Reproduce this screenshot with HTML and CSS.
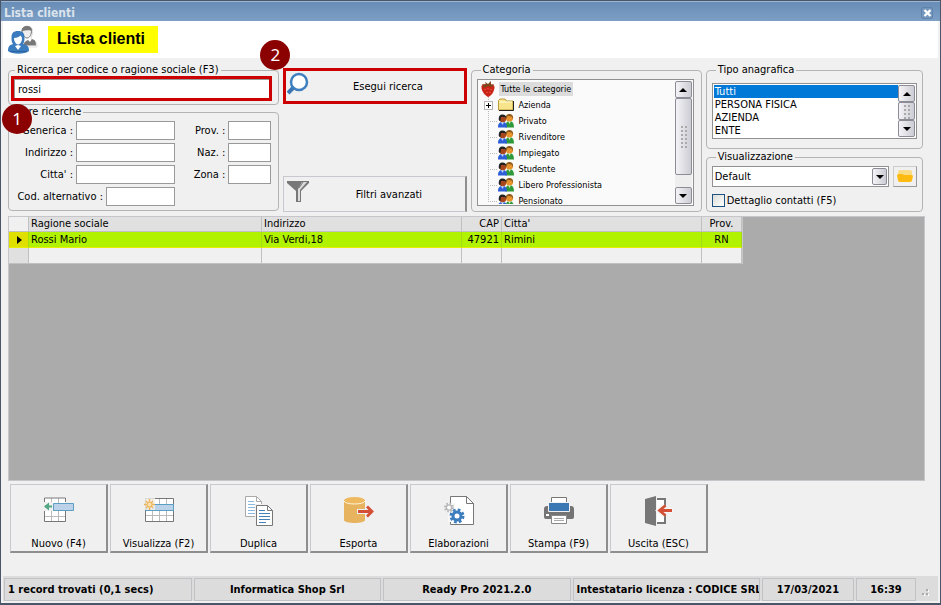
FILE: index.html
```html
<!DOCTYPE html>
<html lang="it">
<head>
<meta charset="utf-8">
<title>Lista clienti</title>
<link rel="stylesheet" href="styles.css">
</head>
<body>
<svg class="defs" aria-hidden="true">
  <defs>
    <symbol id="people" viewBox="0 0 16 16">
      <path d="M7.500 14.500C7.500 10 9 8 11.500 8S16 10 16 14.500z" fill="#2f9a3a"/>
      <path d="M10 8h3l-1.500 3z" fill="#d8f0d0"/>
      <circle cx="11.500" cy="5" r="3.600" fill="#e8932e"/>
      <path d="M8 4.500C8 1.500 10 1 11.500 1S15.500 2 15 6L13.500 3.500 10 3z" fill="#8a5a20"/>
      <path d="M0 14.500C0 10.500 1.500 9 4.500 9S9 10.500 9 14.500z" fill="#2d5fd8"/>
      <path d="M3 9h3l-1.500 3z" fill="#c8dcff"/>
      <circle cx="4.800" cy="6" r="3.300" fill="#a8461c"/>
      <path d="M.8 7C.5 3 2 1.500 4.500 1.500S8.800 3 8.500 6L7 4 3 4 2.300 8.500z" fill="#222"/>
    </symbol>
  </defs>
</svg>
<div class="window">
  <div class="titlebar">
    <span>Lista clienti</span>
    <button class="close" type="button" aria-label="Chiudi"><svg width="9" height="8" viewBox="0 0 9 8"><path d="M1.500 1l6 6M7.500 1l-6 6" stroke="#fff" stroke-width="2.400"/></svg></button>
  </div>
  <header class="header">
    <svg width="30" height="30" viewBox="0 0 30 30" aria-hidden="true">
      <path d="M13 19c3-2 3-3 1-6C12.500 5 14 1 19 1s6.500 4 5 9c-1 3-1.500 4 0 5 3 1 5 2 5 7H15z" fill="#fff" stroke="#ddd"/>
      <path d="M15 20c1-3 3-4 5-5l2 2 2-3c3 1 4 2 4 6.500H15z" fill="#777"/>
      <path d="M14 6c0-3 2-4.500 5-4.500s5 1.500 4.500 5C23 11 21 13 19 13s-4-2-5-7z" fill="#eee" stroke="#777"/>
      <path d="M14 6c0-3.500 2-4.500 5-4.500s5 1 4.700 5.500C22 4 18 6 14 6z" fill="#777"/>
      <path d="M0 26c0-5 2-6 5-7-1.500-2-1.500-4-1.500-6.500C3.500 8 5.500 6 10 6s6.500 2 6.500 6.500c0 2.500 0 4.500-1.500 6.500 4 1 6 2 6 7-4 3.500-17 3.500-21 0z" fill="#3a7cbd"/>
      <path d="M6 13c3 0 5-1 6.500-2.500C13.500 12 14 12 14 14c-.3 3-2 5.500-4 5.500s-4-3-4-6.500z" fill="#fff"/>
      <path d="M7 21l3 4 3-4-3-1z" fill="#fff"/>
      <path d="M2 26.500h17" stroke="#2b639e"/>
    </svg>
    <h1>Lista clienti</h1>
  </header>

  <main class="content">
    <form class="filters">
      <div class="column">
        <fieldset class="group search">
          <legend>Ricerca per codice o ragione sociale (F3)</legend>
          <div class="marked"><input type="text" value="rossi" aria-label="Ricerca per codice o ragione sociale"></div>
        </fieldset>
        <fieldset class="group others">
          <legend>Altre ricerche</legend>
          <div class="row"><label for="gen">Generica :</label><input id="gen" type="text"><label class="second" for="prov">Prov. :</label><input class="short" id="prov" type="text"></div>
          <div class="row"><label for="ind">Indirizzo :</label><input id="ind" type="text"><label class="second" for="naz">Naz. :</label><input class="short" id="naz" type="text"></div>
          <div class="row"><label for="cit">Citta' :</label><input id="cit" type="text"><label class="second" for="zona">Zona :</label><input class="short" id="zona" type="text"></div>
          <div class="row last"><label for="cod">Cod. alternativo :</label><input id="cod" type="text"></div>
          <span class="badge badge-one">1</span>
        </fieldset>
      </div>

      <div class="column actions">
        <button class="wide primary" type="button">
          <svg width="22" height="24" viewBox="0 0 22 24" aria-hidden="true"><path d="M7 15L1 21" stroke="#3a76b4" stroke-width="4"/><circle cx="12" cy="10" r="8" fill="#fff" stroke="#3f7fc0" stroke-width="2.500"/></svg>
          <span>Esegui ricerca</span>
        </button>
        <span class="badge badge-two">2</span>
        <button class="wide" type="button">
          <svg width="23" height="24" viewBox="0 0 23 24" aria-hidden="true"><path d="M0 1h22v2l-8 8v11h-5V11L0 3z" fill="#777"/><path d="M15 2h5l-7 8v11h-2V9z" fill="#ddd"/><path d="M16 2l-4 6" stroke="#777"/></svg>
          <span>Filtri avanzati</span>
        </button>
      </div>

      <fieldset class="group category">
        <legend>Categoria</legend>
        <div class="listbox tree-box">
          <ul class="tree">
            <li class="root"><svg width="16" height="16" viewBox="0 0 16 16" aria-hidden="true"><path d="M1.500 5C3 3 5 3 8 3s6 0 6.500 3c0 4-3 9-6.500 10C4 14 1 9 1.500 5z" fill="#cb2418"/><path d="M2 3l4 1-1-3 3 2 3-3v4l3-1-2 3-4-1-4 2z" fill="#7b4a1c"/><path d="M5 8v1M8 7v1M11 8v1M7 11v1M10 11v1" stroke="#f07050"/></svg><span>Tutte le categorie</span></li>
            <li class="folder"><button type="button" aria-label="Espandi"><svg width="9" height="9" viewBox="0 0 9 9"><path d="M2 4.500h5M4.500 2v5" stroke="#000"/></svg></button><svg width="16" height="16" viewBox="0 0 16 16" aria-hidden="true"><path d="M.5 13V3.500L2 2h5l1.500 2H15v9z" fill="#f8e58b" stroke="#b99b38"/><path d="M1 5h13" stroke="#fffbe0"/><path d="M1 13.500h14.500V4" stroke="#222" fill="none"/></svg><span>Azienda</span></li>
            <li><svg width="16" height="16"><use href="#people"/></svg><span>Privato</span></li>
            <li><svg width="16" height="16"><use href="#people"/></svg><span>Rivenditore</span></li>
            <li><svg width="16" height="16"><use href="#people"/></svg><span>Impiegato</span></li>
            <li><svg width="16" height="16"><use href="#people"/></svg><span>Studente</span></li>
            <li><svg width="16" height="16"><use href="#people"/></svg><span>Libero Professionista</span></li>
            <li><svg width="16" height="16"><use href="#people"/></svg><span>Pensionato</span></li>
          </ul>
          <div class="scrollbar">
            <button type="button" aria-label="Su"><i class="arrow up"></i></button>
            <div class="thumb"><i class="dots"></i></div>
            <div class="track"></div>
            <button type="button" aria-label="Giù"><i class="arrow down"></i></button>
          </div>
        </div>
      </fieldset>

      <div class="column right">
        <fieldset class="group type">
          <legend>Tipo anagrafica</legend>
          <div class="listbox type-box">
            <select size="4" aria-label="Tipo anagrafica">
              <option selected>Tutti</option>
              <option>PERSONA FISICA</option>
              <option>AZIENDA</option>
              <option>ENTE</option>
            </select>
            <div class="scrollbar">
              <button type="button" aria-label="Su"><i class="arrow up"></i></button>
              <div class="thumb"><i class="dots"></i></div>
              <button type="button" aria-label="Giù"><i class="arrow down"></i></button>
            </div>
          </div>
        </fieldset>
        <fieldset class="group view">
          <legend>Visualizzazione</legend>
          <div class="view-row">
            <div class="combo">
              <select aria-label="Visualizzazione"><option>Default</option></select>
              <span class="drop"><i class="arrow down"></i></span>
            </div>
            <button class="open" type="button" aria-label="Apri"><svg width="16" height="13" viewBox="0 0 16 13"><path d="M1 1.500Q1 0 3 0h10q2 0 2 2v4H1z" fill="#f9dc83"/><path d="M0 5.500Q0 4 2 4h3q1 0 2 1h7q2 0 2 1l-1 4.500q-.5 1.500-2 1.500H3q-1.500 0-2-1.500z" fill="#fdbb12"/></svg></button>
          </div>
          <label class="check"><input type="checkbox"><span>Dettaglio contatti (F5)</span></label>
        </fieldset>
      </div>
    </form>

    <div class="grid">
      <table>
        <colgroup><col class="c-mark"><col class="c-name"><col class="c-addr"><col class="c-cap"><col class="c-city"><col class="c-prov"></colgroup>
        <thead><tr><th></th><th>Ragione sociale</th><th>Indirizzo</th><th class="num">CAP</th><th>Citta'</th><th class="mid">Prov.</th></tr></thead>
        <tbody>
          <tr class="current"><td><i class="pointer"></i></td><td>Rossi Mario</td><td>Via Verdi,18</td><td class="num">47921</td><td>Rimini</td><td class="mid">RN</td></tr>
          <tr><td></td><td></td><td></td><td></td><td></td><td></td></tr>
        </tbody>
      </table>
    </div>

    <nav class="toolbar">
      <button type="button">
        <svg width="32" height="32" viewBox="0 0 32 32" aria-hidden="true"><path d="M1.500 2.500h21v24h-21z" fill="#fff"/><path d="M8.500 3v24M15.500 3v24M2 21.500h20M2 15.500h20" stroke="#bbb"/><path d="M1.500 7V3h21v4M1.500 16v10.500h21V16" fill="none" stroke="#777"/><path d="M0 7h10v9H0z" fill="#f0f0f0"/><path d="M2 11.500h7" stroke="#52a882" stroke-width="2"/><path d="M1 11.500l5-4v8z" fill="#52a882"/><path d="M10.500 8.500h20v7h-20z" fill="#bcd2e8" stroke="#5ba0c4"/></svg>
        <span>Nuovo (F4)</span></button>
      <button type="button">
        <svg width="32" height="32" viewBox="0 0 32 32" aria-hidden="true"><path d="M2.500 3.500h28v23h-28z" fill="#fff"/><path d="M9.500 4v22M16.500 4v22M23.500 4v22M3 20.500h27" stroke="#bbb"/><path d="M2.500 3.500h28v23h-28z" fill="none" stroke="#777"/><path d="M3 9.500h27.500v6H3z" fill="#bcd2e8" stroke="#5ba0c4"/><path d="M1 3h11v12H1z" fill="#f4f0e8" opacity=".8"/><path d="M6.500 4v11M1 9.500h11M3 6l7 7M10 6l-7 7" stroke="#edb45c" stroke-width="1.500"/><circle cx="6.500" cy="9.500" r="2.500" fill="#fce0ae" stroke="#edb45c"/></svg>
        <span>Visualizza (F2)</span></button>
      <button type="button">
        <svg width="32" height="32" viewBox="0 0 32 32" aria-hidden="true"><path d="M2.500 1.500h11l5 5v15h-16z" fill="#fff" stroke="#aaa"/><path d="M13.500 1.500v5h5" fill="none" stroke="#aaa"/><path d="M5 6.500h6M5 9.500h10M5 12.500h10M5 15.500h10M5 18.500h7" stroke="#8bb8df"/><path d="M12 9h13l5 6v17H12z" fill="#f0f0f0"/><path d="M13.500 10.500h11l5 5v15h-16z" fill="#fff" stroke="#777"/><path d="M24.500 10.500v5h5" fill="none" stroke="#777"/><path d="M16 15.500h6M16 18.500h11M16 21.500h11M16 24.500h11M16 27.500h7" stroke="#4580b8"/></svg>
        <span>Duplica</span></button>
      <button type="button">
        <svg width="32" height="32" viewBox="0 0 32 32" aria-hidden="true"><path d="M1 5v20c0 4 21 4 21 0V5z" fill="#e8b35e"/><ellipse cx="11.500" cy="5.500" rx="10.500" ry="3.500" fill="#efb960"/><path d="M1 6c1 4 20 4 21 0" fill="none" stroke="#fff4dc"/><path d="M14 16.500h14M24 11.500l5.500 5-5.500 5" fill="none" stroke="#f0f0f0" stroke-width="5"/><path d="M15 16.500h14M24 11.500l5 5-5 5" fill="none" stroke="#d34f35" stroke-width="2.800"/></svg>
        <span>Esporta</span></button>
      <button type="button">
        <svg width="32" height="32" viewBox="0 0 32 32" aria-hidden="true"><path d="M7.500 1.500h16l7 7v21h-23z" fill="#fff" stroke="#777"/><path d="M23.500 1.500v7h7z" fill="#fff" stroke="#777"/><path d="M5 8h7v19H5z" fill="#f8f8f8"/><circle cx="6" cy="12.500" r="4" fill="none" stroke="#b5b5b5" stroke-width="2" stroke-dasharray="1.600 1.540"/><circle cx="6" cy="12.500" r="2.600" fill="#fff" stroke="#b5b5b5" stroke-width="1.400"/><circle cx="14" cy="21" r="6" fill="none" stroke="#3c7dbd" stroke-width="3" stroke-dasharray="2.600 2.110"/><circle cx="14" cy="21" r="4" fill="#fff" stroke="#3c7dbd" stroke-width="3"/></svg>
        <span>Elaborazioni</span></button>
      <button type="button">
        <svg width="32" height="32" viewBox="0 0 32 32" aria-hidden="true"><path d="M8.500 2.500h15v8h-15z" fill="#fff" stroke="#777"/><path d="M4 11h24q3 0 3 3v8q0 2-2 2H3q-2 0-2-2v-8q0-3 3-3z" fill="#747474"/><path d="M5 7h22v9q0 1-1 1H6q-1 0-1-1z" fill="#f0f0f0"/><path d="M6 8h20v8H6z" fill="#3b78b4"/><path d="M3 19h3v2H3z" fill="#fff"/><path d="M8.500 20.500h15v8h-15z" fill="#fff" stroke="#888"/><path d="M11 23.500h10M11 25.500h10" stroke="#aaa"/></svg>
        <span>Stampa (F9)</span></button>
      <button type="button">
        <svg width="32" height="32" viewBox="0 0 32 32" aria-hidden="true"><path d="M12 4h10v24H12z" fill="#fff" stroke="#777" stroke-width="2"/><path d="M2 4l11-3v30L2 28z" fill="#777"/><path d="M13.500 1v30" stroke="#f0f0f0"/><path d="M17 15.500h13M22 10.500l-6 5 6 5" fill="none" stroke="#f6f6f6" stroke-width="5"/><path d="M17 15.500h12M22.500 10.500l-6 5 6 5" fill="none" stroke="#d34f35" stroke-width="2.800"/></svg>
        <span>Uscita (ESC)</span></button>
    </nav>
  </main>

  <footer class="status">
    <span class="start">1 record trovati (0,1 secs)</span>
    <span>Informatica Shop Srl</span>
    <span>Ready Pro 2021.2.0</span>
    <span class="start">Intestatario licenza : CODICE SRL</span>
    <span class="date">17/03/2021</span>
    <span class="time">16:39</span>
    <svg class="grip" width="9" height="9" viewBox="0 0 9 9" aria-hidden="true"><path d="M1 6h2v2H1zM5 2h2v2H5zM5 6h2v2H5z" fill="#aaa"/><path d="M3 7h1v2H3zM7 3h1v2H7zM7 7h1v2H7z" fill="#fff"/></svg>
  </footer>
</div>
</body>
</html>
```
FILE: styles.css
```css
* { box-sizing: border-box; }

body {
  margin: 0;
  color: #000;
  font: 11px/13px "DejaVu Sans Condensed", "DejaVu Sans", sans-serif;
}

button, input, select {
  margin: 0;
  padding: 0;
  border-radius: 0;
  color: inherit;
  font: inherit;
}

svg { display: block; flex: none; }
.defs { position: absolute; width: 0; height: 0; }

.window {
  display: flex;
  flex-direction: column;
  min-height: 100vh;
  border: 1px solid #4a5568;
  border-bottom-width: 2px;
  background: #f0f0f0;
}

/* Title and header */
.titlebar {
  display: flex;
  align-items: center;
  justify-content: space-between;
  height: 20px;
  padding: 3px 7px 0 3px;
  border-top: 1px solid #9db6d3;
  background: linear-gradient(#688db6, #7d9fc6);
  color: #dbe3ec;
  font-size: 12px;
  font-weight: bold;
}

.close {
  display: grid;
  place-items: center;
  width: 12px;
  height: 12px;
  border: 1px solid #5f84ab;
  border-radius: 2px;
  background: #7597bd;
}

.header {
  display: flex;
  align-items: center;
  gap: 10px;
  height: 37px;
  margin: 0 2px;
  padding: 0 5px;
  background: #fff;
}

h1 {
  margin: 0;
  padding: 0 13px 2px 9px;
  background: #ff0;
  font: bold 16px/25px "Liberation Sans", sans-serif;
}

.content {
  display: flex;
  flex: 1;
  flex-direction: column;
  padding: 6px 15px 0 7px;
}

/* Filters */
.filters {
  display: grid;
  grid-template-columns: 271fr 183fr 231fr 217fr;
  gap: 4px;
  margin-right: 2px;
}

.column {
  display: flex;
  flex-direction: column;
  gap: 1px;
  min-width: 0;
}

.group {
  position: relative;
  min-width: 0;
  margin: 0;
  padding: 0;
  border: 1px solid #b4b4b4;
  border-radius: 4px;
}

.group legend {
  margin-left: 4px;
  padding: 0 2px;
  line-height: 12px;
}

.group .badge, .actions .badge { position: absolute; }

.search { padding: 0 6px 3px 2px; }

.marked { border: 3px solid #c00; }

.marked input {
  display: block;
  width: 100%;
  height: 19px;
  padding-left: 3px;
  border: 1px solid #999;
  border-width: 1px 0 0 1px;
  background: #fff;
}

.others { padding: 3px 7px 4px 0; }

.row {
  display: flex;
  align-items: center;
  gap: 3px;
  margin-bottom: 3px;
}

.row label { flex: none; width: 64px; text-align: right; white-space: nowrap; }
.row .second { width: 47px; }
.row.last { margin: 0; padding-right: 96px; }
.row.last label { width: 94px; }

.row input {
  flex: 1;
  min-width: 0;
  height: 19px;
  border: 1px solid #999;
  background: #fff;
}

.row .short { flex: none; width: 43px; }

.badge {
  z-index: 1;
  width: 30px;
  height: 30px;
  border-radius: 50%;
  background: #8b0000;
  color: #fff;
  font: 17px/30px "Noto Sans", sans-serif;
  text-align: center;
}

.badge-one { top: -14px; left: -7px; }
.badge-two { top: -24px; left: -23px; }

.actions {
  position: relative;
  justify-content: space-between;
  padding-top: 4px;
}

.wide {
  display: flex;
  align-items: center;
  width: 100%;
  height: 36px;
  border: 1px solid #c8c8cf;
  border-right: 2px solid #8e8e8e;
  background: #f0f0f0;
}

.wide svg { margin: 0 0 5px 3px; }
.wide span { flex: 1; padding-left: 3px; text-align: center; }
.wide.primary { border: 3px solid #c00; }
.wide.primary svg { margin-left: 1px; }

.category { padding: 3px 7px 4px 5px; }

.listbox {
  display: flex;
  padding: 1px;
  border: 1px solid #919191;
  background: #fff;
}

.tree-box { height: 127px; background: #fafafa; }

.tree {
  flex: 1;
  min-width: 0;
  margin: 0;
  padding: 0;
  overflow: hidden;
  list-style: none;
  font-size: 9px;
  background: repeating-linear-gradient(#bbb 0 1px, transparent 1px 2px) 9px 16px / 1px 106px no-repeat;
}

.tree li {
  display: flex;
  align-items: center;
  gap: 3px;
  height: 16px;
  margin-left: 9px;
  background: repeating-linear-gradient(90deg, #bbb 0 1px, transparent 1px 2px) 0 8px / 10px 1px no-repeat;
}

.tree li svg { margin-left: 10px; }
.tree span { padding: 0 2px; line-height: 14px; white-space: nowrap; }
.tree .root { margin-left: 1px; background: none; }
.tree .root svg { margin: 0; }
.tree .root span { background: #dcdcdc; }
.tree .folder { margin-left: 5px; }

.tree .folder button {
  width: 9px;
  height: 9px;
  border: 0;
  outline: 1px solid #b5b5b5;
  outline-offset: -1px;
  background: #fff;
}

.tree .folder button svg { margin: 0; }
.tree .folder > svg { margin-left: 2px; }

.scrollbar {
  display: flex;
  flex: none;
  flex-direction: column;
  width: 17px;
  background: #eee;
}

.scrollbar button, .thumb, .drop {
  display: grid;
  place-items: center;
  flex: none;
  border: 1px solid #8c8c96;
  border-radius: 2px;
  background: linear-gradient(90deg, #f4f4f7, #ccccd4);
}

.scrollbar button { height: 17px; }
.thumb { height: 77px; }
.track { flex: 1; }

.dots {
  width: 7px;
  height: 23px;
  background: radial-gradient(circle, #aaa 1px, transparent 1px) 0 0 / 4px 4px;
}

.arrow { border: 4px solid transparent; }
.arrow.up { border-top: 0; border-bottom-color: #000; }
.arrow.down { border-bottom: 0; border-top-color: #000; }

.right { gap: 2px; }
.type { padding: 7px 5px 9px; }
.type-box { height: 56px; }

.type-box select {
  flex: 1;
  min-width: 0;
  height: 52px;
  border: 0;
  outline: 0;
  overflow: hidden;
  background: #fff;
}

.type-box option {
  min-height: 13px;
  height: 13px;
  padding: 0 1px;
  line-height: 13px;
}

.type-box option:checked {
  background: #0078d7 linear-gradient(#0078d7, #0078d7);
  color: #fff !important;
}

.type-box .thumb { flex: 1; height: auto; min-height: 0; overflow: hidden; }
.type-box .dots { height: 15px; }

.view { padding: 3px 5px 4px; }
.view-row { display: flex; gap: 4px; }
.combo { position: relative; flex: 1; }

.combo select {
  display: block;
  appearance: none;
  width: 100%;
  height: 21px;
  padding: 0 20px 0 2px;
  border: 1px solid #919191;
  background: #fff;
}

.drop {
  position: absolute;
  top: 2px;
  right: 2px;
  width: 15px;
  height: 17px;
  pointer-events: none;
}

.open {
  display: grid;
  place-items: center;
  width: 24px;
  height: 21px;
  border: 1px solid #ccc;
  border-right-color: #999;
  border-bottom-color: #999;
  background: #f0f0f0;
}

.check {
  display: flex;
  align-items: center;
  gap: 2px;
  margin-top: 7px;
}

.check input {
  appearance: none;
  width: 13px;
  height: 13px;
  border: 1px solid #1c5180;
  background: linear-gradient(135deg, #dcdcd7, #fff);
}

/* Results */
.grid {
  flex: 1;
  margin-top: 4px;
  border: 1px solid #c6c6ca;
  background: #ababab;
}

table {
  width: 734px;
  border-collapse: separate;
  border-spacing: 0;
  border-right: 1px solid #c8c8c8;
  table-layout: fixed;
  background: #f0f0f0;
}

.c-mark { width: 20px; }
.c-name { width: 233px; }
.c-addr { width: 200px; }
.c-cap { width: 40px; }
.c-city { width: 200px; }

th, td {
  height: 16px;
  padding: 0 2px;
  border: 1px solid #c0c0c0;
  border-width: 0 1px 1px 0;
  font-weight: normal;
  line-height: 15px;
  text-align: left;
  white-space: nowrap;
}

th { height: 15px; background: #e0e0e0; line-height: 14px; }
th:first-child { background: #f0f0f0; }
td:first-child { background: #e0e0e0; }
.num { text-align: right; }
.mid { text-align: center; }
.current td { border-color: #a8d810; border-bottom-color: #e6ee00; background: #b0f200; }
.current td:first-child { background: #e0e000; }

.pointer {
  display: block;
  width: 0;
  margin-left: 6px;
  border: 4px solid transparent;
  border-right: 0;
  border-left: 5px solid #000;
}

/* Commands */
.toolbar {
  display: flex;
  flex-wrap: wrap;
  gap: 2px;
  margin: 3px 0 23px 2px;
}

.toolbar button {
  display: flex;
  flex-direction: column;
  align-items: center;
  justify-content: space-between;
  width: 98px;
  height: 69px;
  padding: 10px 0 1px;
  border: 1px solid #c8c8cf;
  border-right: 2px solid #8e8e8e;
  border-bottom: 2px solid #8e8e8e;
  background: #f0f0f0;
}

/* Status bar */
.status {
  display: flex;
  align-items: center;
  gap: 2px;
  margin: 0 2px 2px;
  padding: 2px 0 0 1px;
  background: #dcdcdc;
  font-weight: bold;
}

.status span {
  flex: 1;
  min-width: 0;
  overflow: hidden;
  padding: 0 3px;
  border: 1px solid #c2c2c6;
  line-height: 21px;
  text-align: center;
  white-space: nowrap;
}

.status .start { text-align: left; }
.status .date { flex: none; width: 92px; }
.status .time { flex: none; width: 60px; }
.grip { margin: 4px 8px 0 3px; }
```
